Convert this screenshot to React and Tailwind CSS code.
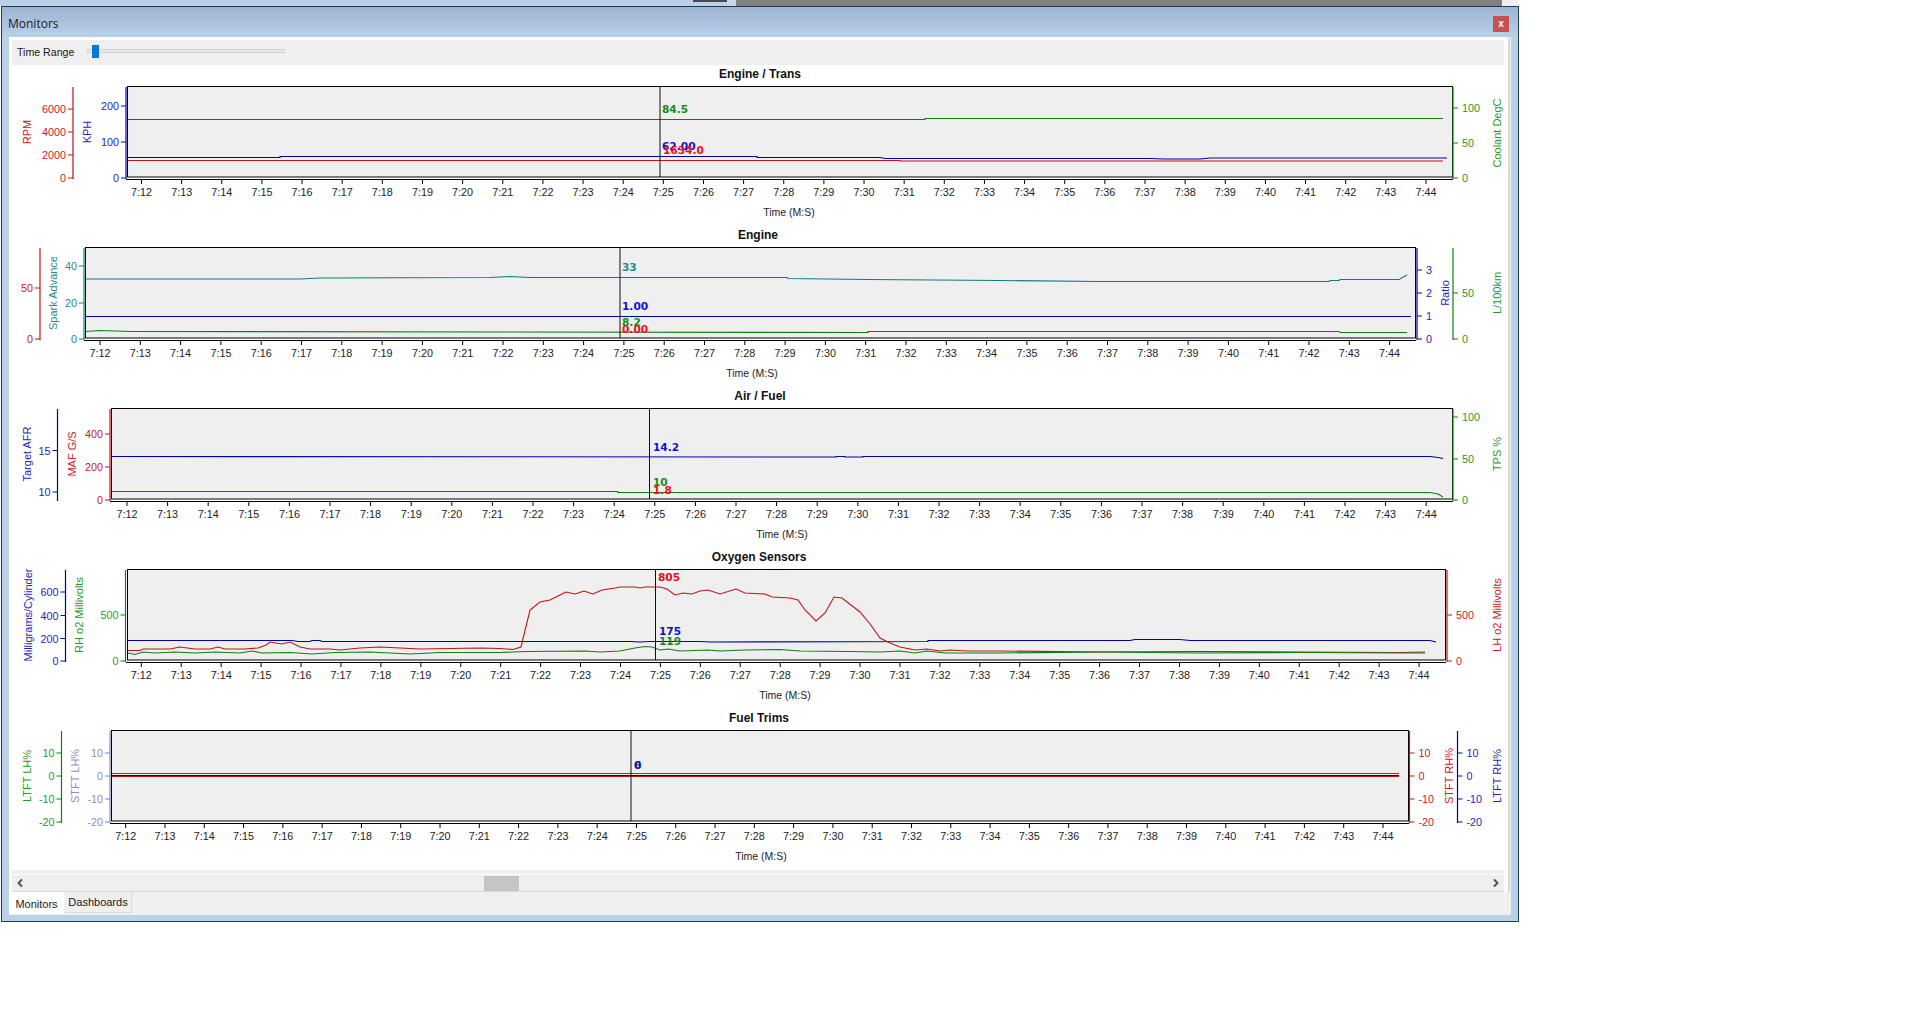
import { ChevronLeft, ChevronRight } from 'lucide-react'

const RED = { line: '#c41218', text: '#cc2026' }
const BLUE = { line: '#0000a8', text: '#2424c4' }
const GREEN = { line: '#0f800f', text: '#259a25' }
const TEAL = { line: '#127a7a', text: '#258a8a' }
const PURPLE = { line: '#8484bc', text: '#8c8cc4' }

const CHARTS = [
  {
    title: 'Engine / Trans', titleX: 760, timeX: 789,
    plot: { l: 127, r: 1452, t: 87, b: 177 },
    ticks: { start: 141.5, step: 40.14 },
    cursor: 660,
    axes: [
      { x: 73, side: 'left', c: RED, title: 'RPM', tx: 27, ty: 132, labels: [['6000', 109], ['4000', 132], ['2000', 155], ['0', 178]] },
      { x: 126, side: 'left', c: BLUE, title: 'KPH', tx: 87, ty: 132, labels: [['200', 106], ['100', 142], ['0', 178]] },
      { x: 1453, side: 'right', c: GREEN, title: 'Coolant DegC', tx: 1497, ty: 133, labels: [['100', 108], ['50', 143], ['0', 178]] },
    ],
    lines: [
      { c: GREEN, pts: '128,119.5 925,119.5 925,118.5 1443,118.5' },
      { c: BLUE, pts: '128,157.5 280,157.5 280,156.5 757,156.5 757,157.5 880,157.5 885,158.5 1150,158.5 1165,159 1200,159 1210,158 1447,158' },
      { c: RED, pts: '128,160.5 900,160.5 900,161 1443,161' },
    ],
    values: [
      { t: '84.5', x: 662, y: 109, c: '#148c14' },
      { t: '62.00', x: 662, y: 146, c: '#1010d8' },
      { t: '1634.0', x: 663, y: 150, c: '#f01020' },
    ],
  },
  {
    title: 'Engine', titleX: 758, timeX: 752,
    plot: { l: 85, r: 1415, t: 248, b: 338 },
    ticks: { start: 100, step: 40.3 },
    cursor: 620,
    axes: [
      { x: 40, side: 'left', c: RED, labels: [['50', 288], ['0', 339]] },
      { x: 84, side: 'left', c: TEAL, title: 'Spark Advance', tx: 53, ty: 293, labels: [['40', 266], ['20', 303], ['0', 339]] },
      { x: 1417, side: 'right', c: BLUE, title: 'Ratio', tx: 1445, ty: 293, labels: [['3', 270], ['2', 293], ['1', 316], ['0', 339]] },
      { x: 1453, side: 'right', c: GREEN, title: 'L/100km', tx: 1497, ty: 293, labels: [['50', 293], ['0', 339]] },
    ],
    lines: [
      { c: TEAL, pts: '86,279 300,279 320,278 490,277.5 510,276.5 530,277.5 787,277.5 788,278.5 868,279.5 1000,280.5 1100,281.5 1329,281.5 1330,280.5 1339,280.5 1340,279.5 1399,279.5 1407,275' },
      { c: BLUE, pts: '86,316.5 1411,316.5' },
      { c: GREEN, pts: '86,331.5 100,330.5 130,331.5 868,332.5 868,331.5 1339,331.5 1340,332.5 1407,332.5' },
    ],
    values: [
      { t: '33', x: 622, y: 267, c: '#1f8a8a' },
      { t: '1.00', x: 622, y: 306, c: '#1010d8' },
      { t: '8.2', x: 622, y: 322, c: '#148c14' },
      { t: '0.00', x: 622, y: 329, c: '#f01020' },
    ],
  },
  {
    title: 'Air / Fuel', titleX: 760, timeX: 782,
    plot: { l: 111, r: 1452, t: 409, b: 499 },
    ticks: { start: 127, step: 40.6 },
    cursor: 649.5,
    axes: [
      { x: 57.5, side: 'left', c: BLUE, title: 'Target AFR', tx: 27, ty: 454, labels: [['15', 450.5], ['10', 492]] },
      { x: 110, side: 'left', c: RED, title: 'MAF G/S', tx: 72, ty: 454, labels: [['400', 434], ['200', 467], ['0', 500]] },
      { x: 1453, side: 'right', c: GREEN, title: 'TPS %', tx: 1497, ty: 454, labels: [['100', 417], ['50', 459], ['0', 500]] },
    ],
    lines: [
      { c: BLUE, pts: '112,456.5 836,457 836,456.5 845,456.5 845,457 863,457 863,456.5 1430,456.5 1438,457.5 1443,458.5' },
      { c: GREEN, pts: '112,491.5 618,491.5 618,492.5 1430,492.5 1438,494 1443,497' },
    ],
    values: [
      { t: '14.2', x: 653, y: 447, c: '#1010d8' },
      { t: '10', x: 653, y: 482, c: '#148c14' },
      { t: '1.8', x: 653, y: 490, c: '#f01020' },
    ],
  },
  {
    title: 'Oxygen Sensors', titleX: 759, timeX: 785,
    plot: { l: 127, r: 1445, t: 570, b: 660 },
    ticks: { start: 141.3, step: 39.93 },
    cursor: 655.5,
    axes: [
      { x: 65.5, side: 'left', c: BLUE, title: 'Milligrams/Cylinder', tx: 28, ty: 615, labels: [['600', 592], ['400', 615.5], ['200', 638.5], ['0', 661]] },
      { x: 125.5, side: 'left', c: GREEN, title: 'RH o2 Millivolts', tx: 79, ty: 615, labels: [['500', 615], ['0', 661]] },
      { x: 1447, side: 'right', c: RED, title: 'LH o2 Millivolts', tx: 1497, ty: 615, labels: [['500', 615], ['0', 661]] },
    ],
    lines: [
      { c: BLUE, pts: '128,640.5 292,640.5 298,641.5 310,641.5 312,640.5 320,640.5 322,641.5 630,641.5 640,642 650,641.5 700,641.5 710,642 928,641.5 928,640.5 1130,640.5 1135,639.5 1180,639.5 1190,640.5 1430,640.5 1436,642' },
      { c: RED, pts: '128,650.5 140,650.5 143,649 170,649 180,647 195,649 210,649 218,647 225,649 245,649 258,648 266,645 270,642 282,644 290,642 300,647 310,649 330,649 340,650 360,648 380,647 420,649 480,648 500,648.5 513,649.5 521,647 530,610 540,602 550,600 566,592 575,594 584,591 593,594 602,590 615,588 620,587 635,587 640,588 645,587 660,587 667,589 675,595 683,593 692,594 700,591 708,590 720,594 736,589 745,593 765,594 772,597 790,598 798,600 805,610 816,621 825,613 834,597 842,598 860,612 870,624 880,638 890,643 900,647 915,650 927,649 940,651 950,650 967,651 1000,651 1100,652 1200,651.5 1300,652 1400,652.5 1425,652' },
      { c: GREEN, pts: '128,653 135,654.5 143,652 155,653 175,652 195,653 215,652 240,653 252,651 262,653 290,652.5 312,654 335,652.5 370,652 410,654 440,652.5 500,652.5 525,651.5 585,651 600,652 620,651 635,648 645,646.5 652,647 660,650 668,649 680,651 708,650 720,651 745,650 780,649.5 800,651 850,651.5 880,652 900,651 915,653 927,651 945,653 1000,653 1100,652 1200,653 1300,652.5 1400,653 1425,653' },
    ],
    values: [
      { t: '805', x: 658, y: 577, c: '#e01020' },
      { t: '175', x: 659, y: 631, c: '#1010d8' },
      { t: '119', x: 659, y: 641, c: '#148c14' },
    ],
  },
  {
    title: 'Fuel Trims', titleX: 759, timeX: 761,
    plot: { l: 111, r: 1408, t: 731, b: 821 },
    ticks: { start: 125.7, step: 39.29 },
    cursor: 631,
    axes: [
      { x: 61.5, side: 'left', c: GREEN, title: 'LTFT LH%', tx: 27, ty: 776, labels: [['10', 753], ['0', 776], ['-10', 799], ['-20', 822]] },
      { x: 110, side: 'left', c: PURPLE, title: 'STFT LH%', tx: 75, ty: 776, labels: [['10', 753], ['0', 776], ['-10', 799], ['-20', 822]] },
      { x: 1409.5, side: 'right', c: RED, title: 'STFT RH%', tx: 1449, ty: 776, labels: [['10', 753], ['0', 776], ['-10', 799], ['-20', 822]] },
      { x: 1457.5, side: 'right', c: BLUE, title: 'LTFT RH%', tx: 1497, ty: 776, labels: [['10', 753], ['0', 776], ['-10', 799], ['-20', 822]] },
    ],
    lines: [
      { c: GREEN, pts: '112,773.5 1399,773.5' },
      { c: BLUE, pts: '112,775.5 1399,775.5' },
      { c: RED, pts: '112,776.5 1399,776.5' },
    ],
    values: [
      { t: '6', x: 634, y: 765, c: '#148c14' },
      { t: '0', x: 634, y: 765, c: '#1010d8' },
    ],
  },
]

const TIMES = Array.from({ length: 33 }, (_, i) => `7:${i + 12}`)
const SANS = 'Liberation Sans, Arial, sans-serif'

function Axis({ axis, top, bottom }) {
  const left = axis.side === 'left'
  const dir = left ? -1 : 1
  return (
    <g>
      <line x1={axis.x} x2={axis.x} y1={top} y2={bottom} stroke={axis.c.line} strokeWidth="1.2" />
      {axis.labels.map(([label, y]) => (
        <g key={label}>
          <line x1={axis.x} x2={axis.x + dir * 5} y1={y} y2={y} stroke={axis.c.line} strokeWidth="1" />
          <text x={axis.x + (left ? -7 : 9)} y={y + 4} textAnchor={left ? 'end' : 'start'} fill={axis.c.text} fontSize="10.8" fontFamily={SANS}>{label}</text>
        </g>
      ))}
      {axis.title && (
        <text
          transform={`translate(${axis.tx + 4} ${axis.ty}) rotate(-90)`}
          textAnchor="middle"
          fill={axis.c.text}
          fontSize="11"
          fontFamily={SANS}
        >
          {axis.title}
        </text>
      )}
    </g>
  )
}

function Chart({ chart, index }) {
  const y0 = 65 + index * 161
  const { plot, ticks } = chart
  return (
    <svg className="block" width="1499" height="161" viewBox={`9 ${y0} 1499 161`}>
      <text x={chart.titleX} y={y0 + 13} textAnchor="middle" fontSize="12" fontWeight="700" fontFamily={SANS} fill="#111">{chart.title}</text>
      <rect x={plot.l + 0.5} y={plot.t - 0.5} width={plot.r - plot.l} height={plot.b - plot.t + 0.5} fill="#efefef" stroke="#000" strokeWidth="1" />
      {chart.lines.map((l, i) => (
        <polyline key={i} points={l.pts} fill="none" stroke={l.c.line} strokeWidth="1.1" />
      ))}
      <line x1={chart.cursor} x2={chart.cursor} y1={plot.t} y2={plot.b} stroke="#111" strokeWidth="1" />
      <line x1={plot.l - 1} x2={plot.r + 1} y1={plot.b + 2.5} y2={plot.b + 2.5} stroke="#000" strokeWidth="1" />
      {TIMES.map((t, i) => {
        const x = ticks.start + i * ticks.step
        return (
          <g key={t}>
            <line x1={x} x2={x} y1={plot.b + 2} y2={plot.b + 7} stroke="#000" strokeWidth="1" />
            <text x={x} y={plot.b + 19} textAnchor="middle" fontSize="10.8" fontFamily={SANS} fill="#222">{t}</text>
          </g>
        )
      })}
      <text x={chart.timeX} y={plot.b + 39} textAnchor="middle" fontSize="10.5" fontFamily={SANS} fill="#222">Time (M:S)</text>
      {chart.axes.map((a) => (
        <Axis key={a.x} axis={a} top={plot.t} bottom={plot.b + 2} />
      ))}
      {chart.values.map((v) => (
        <text key={v.t} x={v.x} y={v.y + 4} fontSize="10.6" fontWeight="700" fontFamily="DejaVu Sans, sans-serif" fill={v.c}>{v.t}</text>
      ))}
    </svg>
  )
}

export default function App() {
  return (
    <div className="min-h-screen w-[1924px] bg-white font-['Liberation_Sans',Arial,sans-serif]">
      {/* strip of the window behind */}
      <div className="flex h-[6px]">
        <div className="w-[693px] bg-[#b9d0e8]" />
        <div className="w-[34px] bg-[#b9d0e8]">
          <div className="h-[2px] bg-[#4a4a52]" />
        </div>
        <div className="w-[9px] bg-[#c8d8ea]" />
        <div className="w-[766px] bg-[#808080]" />
        <div className="w-[17px] bg-[#f0f0f0]" />
      </div>

      <div className="ml-px flex h-[916px] w-[1518px] flex-col border border-[#1d3c4c] bg-[#b9d1e9]">
        <div className="flex h-[30px] shrink-0 items-center justify-between bg-gradient-to-b from-[#9cb4d2] to-[#b9d0e8] pl-[6px] pr-[9px] pt-1">
          <span className="font-['Open_Sans',sans-serif] text-[12px] text-[#1a1a1a]">Monitors</span>
          <button className="flex h-4 w-4 items-center justify-center bg-[#c75050] pb-px text-[10px] font-bold leading-none text-white">x</button>
        </div>

        <div className="mx-[7px] mb-[6px] flex flex-1 flex-col bg-[#f0f0f0]">
          <div className="w-[1501px] border-r-2 border-[#d9d9d9] bg-white pt-[3px]">
            <div className="ml-[3px] mr-1 flex h-[25px] items-center bg-[#efefef] pl-[5px]">
              <span className="w-[70px] text-[10.6px] text-[#1a1a1a]">Time Range</span>
              <div className="relative -mt-1 h-1 w-[198px] border border-[#d4d4d4] bg-[#e7e7e7]">
                <div className="absolute -top-[5px] left-[4px] h-[13px] w-[7px] bg-[#0078d7]" />
              </div>
            </div>

            {CHARTS.map((chart, i) => (
              <Chart key={chart.title} chart={chart} index={i} />
            ))}

            <div className="ml-[3px] mr-1 h-[22px] border-b border-[#d9d9d9] bg-[#f0f0f0] pt-1">
              <div className="flex h-[17px] items-center justify-between border-t border-white bg-[#efefef] px-[2px]">
                <ChevronLeft className="h-3 w-3 text-[#555]" strokeWidth={4} />
                <div className="ml-[458px] mr-auto h-[15px] w-[35px] bg-[#c5c5c5]" />
                <ChevronRight className="h-3 w-3 text-[#555]" strokeWidth={4} />
              </div>
            </div>
          </div>

          <div className="flex h-[23px] items-start text-[11px] text-[#1a1a1a]">
            <div className="flex h-[22px] w-[55px] items-center justify-center bg-white pt-[3px]">Monitors</div>
            <div className="ml-px flex h-[21px] w-[67px] items-center justify-center border-b border-r border-[#d9d9d9] bg-[#efefef] pt-px">Dashboards</div>
          </div>
        </div>
      </div>
    </div>
  )
}
